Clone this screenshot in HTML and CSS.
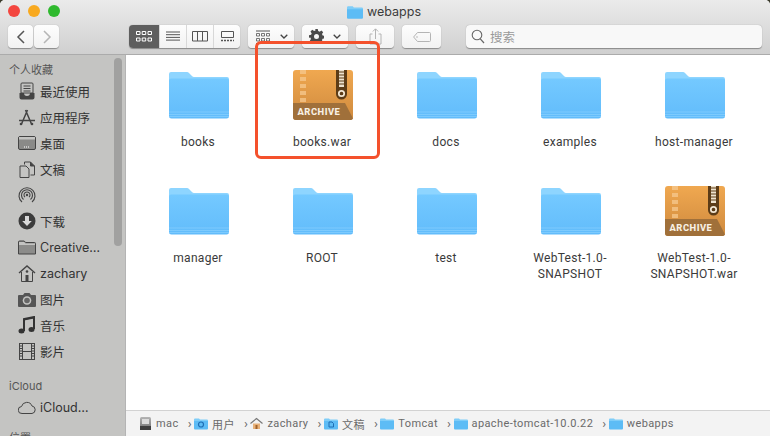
FILE: index.html
```html
<!DOCTYPE html>
<html lang="zh">
<head>
<meta charset="utf-8">
<title>webapps</title>
<link rel="stylesheet" href="styles.css">
</head>
<body>
<svg class="defs" width="0" height="0">
  <defs>
    <linearGradient id="fgrad" x1="0" y1="0" x2="0" y2="1"><stop offset="0" stop-color="#74c9ff"/><stop offset="1" stop-color="#62bcfb"/></linearGradient>
    <linearGradient id="agrad" x1="0" y1="0" x2="0" y2="1"><stop offset="0" stop-color="#f0a850"/><stop offset="1" stop-color="#cf8a3e"/></linearGradient>
    <linearGradient id="dgrad" x1="0" y1="0" x2="0" y2="1"><stop offset="0" stop-color="#b5b5b5"/><stop offset="1" stop-color="#6d6d6d"/></linearGradient>
    <symbol id="folder" viewBox="0 0 60 48">
      <path d="M0 3a2 2 0 0 1 2-2h16a3 3 0 0 1 2 1l3 3a3 3 0 0 0 2 1h33a2 2 0 0 1 2 2v8H0z" fill="#8ed5ff"/>
      <path d="M0 9.500a2 2 0 0 1 2-2h56a2 2 0 0 1 2 2V45a2.500 2.500 0 0 1-2.500 2.500h-55A2.500 2.500 0 0 1 0 45z" fill="url(#fgrad)"/>
      <path d="M0 41h60M0 43.500h60M0 45.500h60" stroke="#8ed3ff" stroke-width=".6" fill="none"/>
    </symbol>
    <symbol id="archive" viewBox="0 0 60 50">
      <rect width="60" height="50" rx="3" fill="url(#agrad)"/>
      <path d="M0 33h52l8 15.500a3 3 0 0 1-3 1.500H3a3 3 0 0 1-3-3z" fill="#a0703a"/>
      <path d="M7 0h6v4H7zM7 7h6v4H7zM7 14h6v4H7zM7 21h6v4H7zM7 28h6v4H7z" fill="#f6c88f" opacity=".75"/>
      <path d="M43 0h11v24a5.500 5.500 0 0 1-11 0z" fill="#5c3c17"/>
      <path d="M46 0h5v17h-5z" fill="#eee3cf"/>
      <path d="M45 2h7M45 5h7M45 8h7M45 11h7M45 14h7" stroke="#5c3c17" stroke-width="1"/>
      <circle cx="48.500" cy="23.500" r="2.700" fill="none" stroke="#f3e8d5" stroke-width="1.700"/>
      <text x="4.500" y="44.500" class="archive-text">ARCHIVE</text>
    </symbol>
    <symbol id="minifolder" viewBox="0 0 14 12">
      <path d="M0 2a1 1 0 0 1 1-1h4l1 1h7a1 1 0 0 1 1 1v2H0z" fill="#7fcdf8"/>
      <path d="M0 3.500h14V11a1 1 0 0 1-1 1H1a1 1 0 0 1-1-1z" fill="#5dbcf5"/>
    </symbol>
  </defs>
</svg>

<div class="window">
  <header class="chrome">
    <div class="titlebar">
      <div class="lights"><i class="light red"></i><i class="light yellow"></i><i class="light green"></i></div>
      <div class="title">
        <svg class="title-icon" width="16" height="14"><use href="#minifolder"/></svg>
        <span>webapps</span>
      </div>
    </div>
    <div class="toolbar">
      <div class="seg nav">
        <button class="btn nav-btn"><svg width="10" height="14" viewBox="0 0 10 14"><path d="M8 1L2 7l6 6" fill="none" stroke="#555" stroke-width="1.500"/></svg></button>
        <button class="btn nav-btn"><svg width="10" height="14" viewBox="0 0 10 14"><path d="M2 1l6 6-6 6" fill="none" stroke="#b5b5b5" stroke-width="1.500"/></svg></button>
      </div>
      <div class="seg views">
        <button class="view active"><svg width="16" height="11" viewBox="0 0 16 11"><path d="M.5.500h3.500v3H.5zM6.200.500h3.500v3H6.200zM12 .500h3.500v3H12zM.5 7h3.500v3H.5zM6.200 7h3.500v3H6.200zM12 7h3.500v3H12z" fill="none" stroke="#fff"/></svg></button>
        <button class="view"><svg width="16" height="11" viewBox="0 0 16 11"><path d="M1 1h14M1 3.700h14M1 6.400h14M1 9.100h14" stroke="#555"/></svg></button>
        <button class="view"><svg width="17" height="11" viewBox="0 0 17 11"><path d="M.5.500h15v9.500H.5zM5.500.500V10M10.500.500V10" fill="none" stroke="#555"/></svg></button>
        <button class="view"><svg width="15" height="11" viewBox="0 0 15 11"><path d="M1.500.500h12v6h-12z" fill="none" stroke="#555"/><path d="M1 9.500h13" stroke="#555" stroke-width="1.500" stroke-dasharray="2 1"/></svg></button>
      </div>
      <button class="btn drop group"><svg width="16" height="14" viewBox="0 0 16 14"><path d="M1 1h14M1 13.500h14" stroke="#555"/><path d="M1.500 3.500h3v2.500h-3zM6.500 3.500h3v2.500h-3zM11.500 3.500h3v2.500h-3zM1.500 8.500h3v2.500h-3zM6.500 8.500h3v2.500h-3zM11.500 8.500h3v2.500h-3z" fill="none" stroke="#555" stroke-width=".8"/></svg><svg class="chev" width="8" height="5" viewBox="0 0 8 5"><path d="M.7.700L4 4 7.300.700" fill="none" stroke="#444" stroke-width="1.300"/></svg></button>
      <button class="btn drop gear"><svg width="15" height="15" viewBox="0 0 24 24"><path fill="#4a4a4a" fill-rule="evenodd" d="M10 0h4l.7 3.300 2.300 1 2.900-1.900 2.800 2.800-1.900 2.900 1 2.300 3.200.6v4l-3.300.7-1 2.300 1.900 2.900-2.800 2.800-2.900-1.900-2.300 1L14 24h-4l-.7-3.300-2.300-1-2.900 1.900-2.800-2.800 1.900-2.900-1-2.300L0 14v-4l3.300-.7 1-2.300-1.900-2.900 2.800-2.800 2.900 1.900 2.300-1zM12 8a4 4 0 1 0 0 8 4 4 0 0 0 0-8z"/></svg><svg class="chev" width="8" height="5" viewBox="0 0 8 5"><path d="M.7.700L4 4 7.300.700" fill="none" stroke="#444" stroke-width="1.300"/></svg></button>
      <button class="btn share"><svg width="13" height="17" viewBox="0 0 13 17"><path d="M3.500 6H1v10h11V6H9.500M6.500 11V1M3.800 3.500L6.500.8l2.700 2.700" fill="none" stroke="#b4b4b4"/></svg></button>
      <button class="btn tag"><svg width="18" height="10" viewBox="0 0 18 10"><path d="M4.500.500h12a1 1 0 0 1 1 1v7a1 1 0 0 1-1 1h-12L.6 5z" fill="none" stroke="#b4b4b4"/><circle cx="4" cy="5" r=".8" fill="#b4b4b4"/></svg></button>
      <div class="search">
        <svg width="14" height="15" viewBox="0 0 14 15"><circle cx="6" cy="6" r="4.800" fill="none" stroke="#666" stroke-width="1.100"/><path d="M9.300 9.800l3.700 4.200" stroke="#666" stroke-width="1.200"/></svg>
        <span>搜索</span>
      </div>
    </div>
  </header>

  <div class="body">
    <aside class="sidebar">
      <div class="scrollbar"></div>
      <div class="side-head">个人收藏</div>
      <ul class="side-list">
        <li><svg width="17" height="18" viewBox="0 0 17 18"><path d="M3.500 1h10a1 1 0 0 1 1 1v9h-12V2a1 1 0 0 1 1-1zM5 4h7M5 6.500h7M5 9h7" fill="none" stroke="#444"/><path d="M1 11h4.500a3 3 0 0 0 6 0H16v4.500a2 2 0 0 1-2 2H3a2 2 0 0 1-2-2z" fill="#444"/></svg>最近使用</li>
        <li><svg width="18" height="17" viewBox="0 0 18 17"><path d="M9.500 1L3.500 15M7.500 1l6 14M1 11.500h16" fill="none" stroke="#444" stroke-width="1.500"/><circle cx="3" cy="15" r="1.300" fill="#444"/><circle cx="14" cy="15" r="1.300" fill="#444"/></svg>应用程序</li>
        <li><svg width="18" height="14" viewBox="0 0 18 14"><rect x=".5" y=".5" width="17" height="13" rx="1.500" fill="#8a8a88" stroke="#444"/><path d="M1 1h16v2.500H1z" fill="#c4c4c2"/><path d="M6 11h6" stroke="#ddd" stroke-dasharray="1 1" stroke-width="1.500"/></svg>桌面</li>
        <li><svg width="17" height="17" viewBox="0 0 17 17"><path d="M6 3.500V1h6l4 4v9h-4" fill="#c4c4c2" stroke="#444"/><path d="M1.500 5h6l3 3v8.500h-9z" fill="#c4c4c2" stroke="#444"/><path d="M12 1v4h4" fill="#444" stroke="#444"/></svg>文稿</li>
        <li><svg width="18" height="18" viewBox="0 0 18 18"><g fill="none" stroke="#444" stroke-width="1.100"><path d="M4 16a8 8 0 1 1 10 0"/><path d="M5.500 13.500a5.500 5.500 0 1 1 7 0"/><path d="M7 11.200a3 3 0 1 1 4 0"/></g><circle cx="9" cy="9" r="1.200" fill="#444"/></svg></li>
        <li><svg width="18" height="18" viewBox="0 0 18 18"><circle cx="9" cy="9" r="8.500" fill="#3c3c3c"/><path d="M7 4h4v5h2.800L9 14 4.200 9H7z" fill="#d8d8d8"/></svg>下载</li>
        <li><svg width="18" height="15" viewBox="0 0 18 15"><path d="M.5 2A1 1 0 0 1 1.500 1h4.700l1.500 1.500h8.800a1 1 0 0 1 1 1V14H.5z" fill="#8c8c8a" stroke="#444"/><path d="M1 2h5l1.500 1.500H17V5H1z" fill="#c4c4c2"/></svg>Creative…</li>
        <li><svg width="18" height="17" viewBox="0 0 18 17"><path d="M1 8l8-7 8 7" fill="none" stroke="#444" stroke-width="1.400"/><path d="M3.500 7v9.500h11V7" fill="none" stroke="#444"/><path d="M7.500 10h3v6.500h-3z" fill="#444"/><circle cx="9" cy="6.500" r="1.300" fill="#444"/></svg>zachary</li>
        <li><svg width="18" height="15" viewBox="0 0 18 15"><path d="M1 3h4l1.500-2h5L13 3h4a1 1 0 0 1 1 1v10a1 1 0 0 1-1 1H1a1 1 0 0 1-1-1V4a1 1 0 0 1 1-1z" fill="#555"/><circle cx="9" cy="8.500" r="4.300" fill="#c4c4c2"/><circle cx="9" cy="8.500" r="2.800" fill="#666"/></svg>图片</li>
        <li><svg width="18" height="18" viewBox="0 0 18 18"><path d="M6 15V3l10-2v12" fill="none" stroke="#333" stroke-width="2"/><path d="M6 4.500l10-2V1L6 3z" fill="#333"/><ellipse cx="3.500" cy="15" rx="3" ry="2.500" fill="#333"/><ellipse cx="13.500" cy="13.500" rx="3" ry="2.500" fill="#333"/></svg>音乐</li>
        <li><svg width="16" height="17" viewBox="0 0 16 17"><rect x=".5" y=".5" width="15" height="16" fill="#c4c4c2" stroke="#444"/><path d="M3.500 1v15M12.500 1v15M4 8.500h8" stroke="#444"/><path d="M1 3h2M1 5.500h2M1 8h2M1 10.500h2M1 13h2M13 3h2M13 5.500h2M13 8h2M13 10.500h2M13 13h2" stroke="#444"/></svg>影片</li>
      </ul>
      <div class="side-head cloud-head">iCloud</div>
      <ul class="side-list">
        <li><svg width="18" height="13" viewBox="0 0 18 13"><path d="M4 12.500a3.500 3.500 0 0 1-.5-7A5.500 5.500 0 0 1 14 5a3.800 3.800 0 0 1 0 7.500z" fill="none" stroke="#444"/></svg>iCloud…</li>
      </ul>
      <div class="side-head place-head">位置</div>
    </aside>

    <main class="content">
      <div class="grid">
        <figure class="item"><svg class="icon" width="60" height="48"><use href="#folder"/></svg><figcaption>books</figcaption></figure>
        <figure class="item"><svg class="icon" width="60" height="50"><use href="#archive"/></svg><figcaption>books.war</figcaption></figure>
        <figure class="item"><svg class="icon" width="60" height="48"><use href="#folder"/></svg><figcaption>docs</figcaption></figure>
        <figure class="item"><svg class="icon" width="60" height="48"><use href="#folder"/></svg><figcaption>examples</figcaption></figure>
        <figure class="item"><svg class="icon" width="60" height="48"><use href="#folder"/></svg><figcaption>host-manager</figcaption></figure>
        <figure class="item"><svg class="icon" width="60" height="48"><use href="#folder"/></svg><figcaption>manager</figcaption></figure>
        <figure class="item"><svg class="icon" width="60" height="48"><use href="#folder"/></svg><figcaption>ROOT</figcaption></figure>
        <figure class="item"><svg class="icon" width="60" height="48"><use href="#folder"/></svg><figcaption>test</figcaption></figure>
        <figure class="item"><svg class="icon" width="60" height="48"><use href="#folder"/></svg><figcaption>WebTest-1.0-<br>SNAPSHOT</figcaption></figure>
        <figure class="item"><svg class="icon" width="60" height="50"><use href="#archive"/></svg><figcaption>WebTest-1.0-<br>SNAPSHOT.war</figcaption></figure>
      </div>
      <div class="highlight"></div>
      <footer class="pathbar">
        <span class="crumb"><svg width="13" height="15" viewBox="0 0 13 15"><rect x="1" y="1" width="11" height="13" rx="1.500" fill="url(#dgrad)"/><rect x="1" y="10" width="11" height="4" fill="#3f3f3f"/><rect x="3" y="3" width="7" height="5" fill="#dcdcdc"/></svg>mac</span>
        <span class="crumb"><svg width="14" height="13"><use href="#minifolder"/><circle cx="7" cy="7.500" r="2.500" fill="none" stroke="#1f6fb5" stroke-width="1.200"/></svg>用户</span>
        <span class="crumb"><svg width="13" height="13" viewBox="0 0 13 13"><path d="M.5 6.500l6-5 6 5" fill="none" stroke="#777" stroke-width="1.200"/><path d="M3 6.500h7V12H3z" fill="#e8b27a"/><path d="M5.500 8h2v4h-2z" fill="#a0622a"/></svg>zachary</span>
        <span class="crumb"><svg width="14" height="13"><use href="#minifolder"/><path d="M5 5h3l1.500 1.500V10H5z" fill="none" stroke="#1f6fb5"/></svg>文稿</span>
        <span class="crumb"><svg width="14" height="13"><use href="#minifolder"/></svg>Tomcat</span>
        <span class="crumb"><svg width="14" height="13"><use href="#minifolder"/></svg>apache-tomcat-10.0.22</span>
        <span class="crumb last"><svg width="14" height="13"><use href="#minifolder"/></svg>webapps</span>
      </footer>
    </main>
  </div>
</div>
</body>
</html>
```
FILE: styles.css
```css
* { box-sizing: border-box; }
html, body { margin: 0; height: 436px; overflow: hidden; background: #3a3a2c; }
body { font-family: "Inter", "Noto Sans CJK SC", sans-serif; color: #3a3a3a; }
.defs { position: absolute; }
.archive-text { font: 800 9.400px "Roboto", "Liberation Sans", sans-serif; letter-spacing: .5px; fill: #f8f0e4; }

.window { width: 770px; height: 436px; display: flex; flex-direction: column; border-radius: 5px 5px 0 0; overflow: hidden; background: #fff; }

.chrome { height: 55px; flex: none; background: linear-gradient(#ebebeb, #d0d0d0); border-bottom: 1px solid #ababab; }
.titlebar { height: 23px; position: relative; display: flex; align-items: center; justify-content: center; }
.lights { position: absolute; left: 8px; top: 5px; display: flex; gap: 8px; }
.light { width: 12px; height: 12px; border-radius: 50%; }
.red { background: #f3463f; }
.yellow { background: #f8a91f; }
.green { background: #2fb92e; }
.title { display: flex; align-items: center; gap: 4px; padding-right: 2px; font-size: 12.500px; color: #3c3c3c; }
.title-icon { display: block; }

.toolbar { display: flex; align-items: flex-start; padding: 2px 8px 0; height: 25px; }
.btn { border: 0; padding: 0; height: 23px; background: linear-gradient(#fdfdfd, #f2f2f2); border-radius: 4px; box-shadow: 0 .5px 1px rgba(0,0,0,.35); display: flex; align-items: center; justify-content: center; }
.seg { display: flex; }
.nav { gap: 1px; margin-right: 70px; }
.nav-btn { width: 25px; }
.views { width: 111px; height: 23px; border-radius: 4px; overflow: hidden; box-shadow: 0 .5px 1px rgba(0,0,0,.35); gap: 1px; background: #d8d8d8; margin-right: 8px; }
.view { flex: 1; border: 0; padding: 0; background: linear-gradient(#fdfdfd, #f2f2f2); display: flex; align-items: center; justify-content: center; }
.view.active { flex: none; width: 30px; background: #5e5e5e; }
.drop { width: 46px; gap: 9px; margin-right: 8px; }
.share { width: 38px; margin-right: 8px; }
.tag { width: 39px; margin-right: 25px; }
.search { width: 296px; height: 23px; background: #f8f8f8; border-radius: 4px; box-shadow: 0 .5px 1px rgba(0,0,0,.35); display: flex; align-items: center; gap: 5px; padding-left: 5px; font-size: 12.500px; color: #9a9a9a; }

.body { flex: 1; min-height: 0; display: flex; }
.sidebar { width: 126px; flex: none; background: #c4c4c2; position: relative; overflow: hidden; border-right: 1px solid #b4b4b4; padding-top: 7px; font-size: 12.500px; color: #333; }
.scrollbar { position: absolute; left: 114px; top: 3px; width: 8px; height: 188px; border-radius: 4px; background: #a1a1a0; }
.side-head { padding-left: 9px; height: 16px; line-height: 16px; font-size: 11px; color: #555; }
.side-list { list-style: none; margin: 0; padding: 0; }
.side-list li { height: 26px; display: flex; align-items: center; padding-left: 18px; gap: 4px; position: relative; white-space: nowrap; }
.side-list svg { width: 18px; flex: none; }
.cloud-head { margin-top: 14px; }
.place-head { margin-top: 10px; }

.content { flex: 1; min-width: 0; display: flex; flex-direction: column; position: relative; }
.grid { flex: 1; display: grid; grid-template-columns: repeat(5, 124px); grid-auto-rows: 116px; padding: 15px 0 0 11px; }
.item { margin: 0; display: flex; flex-direction: column; align-items: center; }
.icon { display: block; height: 50px; }
figcaption { margin: 14px 2px 0 0; text-align: center; font: 12px/16px "Roboto", sans-serif; letter-spacing: .3px; color: #3a3a3a; white-space: nowrap; }

.highlight { position: absolute; left: 129px; top: -14px; width: 125px; height: 118px; border: 3px solid #f4512c; border-radius: 6px; }

.pathbar { height: 26px; flex: none; background: #f3f3f3; border-top: 1px solid #d2d2d2; display: flex; align-items: center; padding-left: 13px; font: 11px "Roboto", "Noto Sans CJK SC", sans-serif; letter-spacing: .4px; color: #6a6a6a; white-space: nowrap; }
.crumb { display: flex; align-items: center; gap: 4px; }
.crumb::after { content: "›"; margin: 0 0 0 3px; width: 8.500px; text-align: center; color: #666; font-size: 13px; }
.crumb.last::after { content: none; }
```
